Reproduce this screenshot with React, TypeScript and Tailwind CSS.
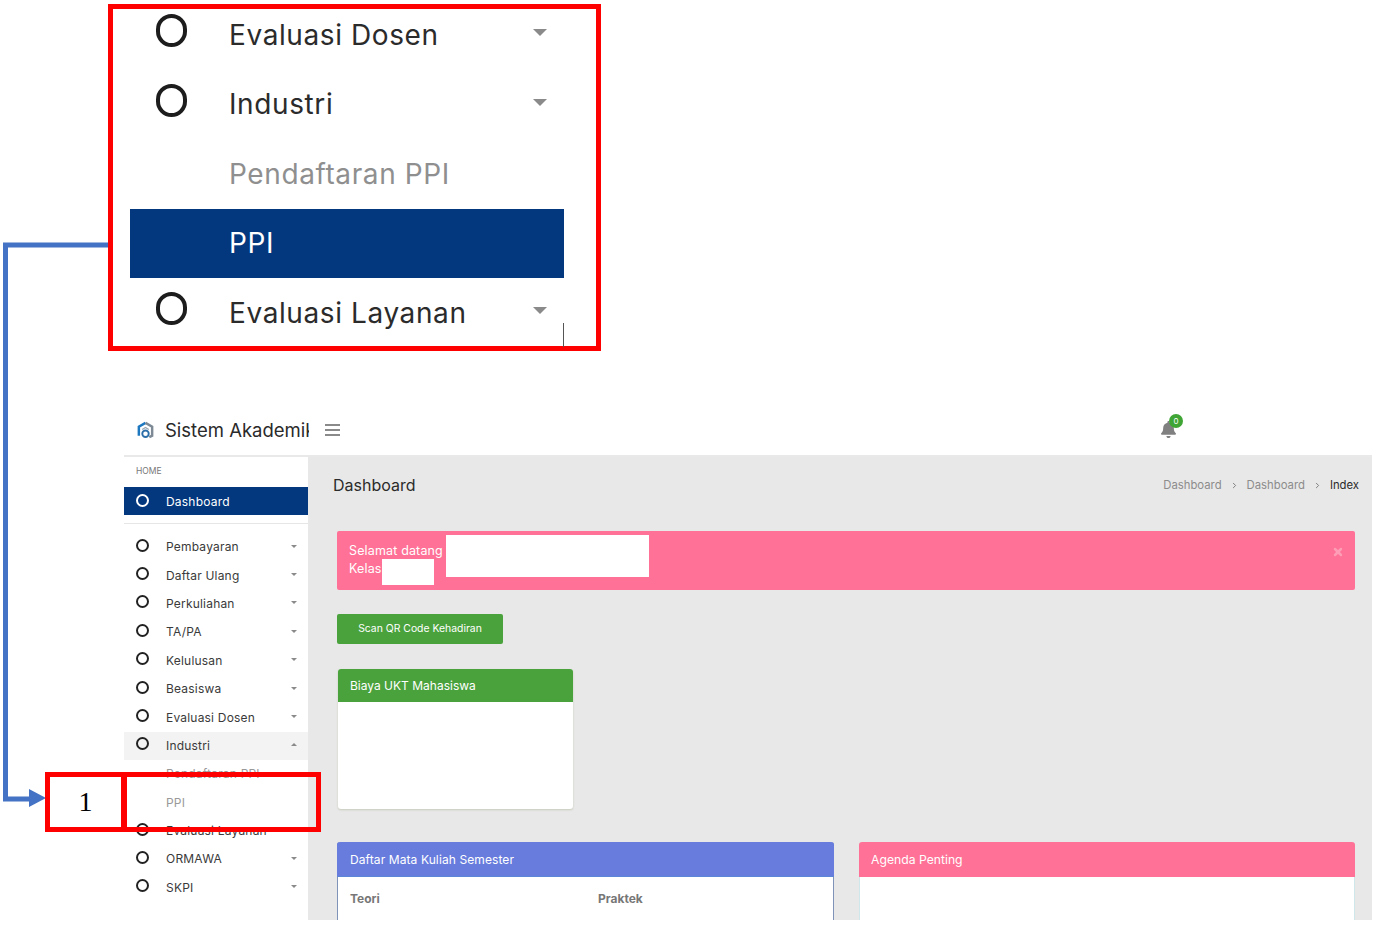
import { X, ChevronRight } from "lucide-react";
import { FaBell } from "react-icons/fa";

const font = "font-['Inter','Liberation_Sans',sans-serif]";

function Caret({ up = false, large = false }: { up?: boolean; large?: boolean }) {
  const size = large ? "border-x-[7px] border-t-[7px]" : "border-x-[3px] border-t-[3px]";
  return (
    <span className={`block h-0 w-0 border-x-transparent border-t-[#8a8a8a] ${size} ${up ? "rotate-180" : ""}`} />
  );
}

function Ring({ className }: { className: string }) {
  return <span className={`block shrink-0 rounded-full ${className}`} />;
}

function ZoomRow({ label, caret = true, ring = true, active = false, muted = false }: { label: string; caret?: boolean; ring?: boolean; active?: boolean; muted?: boolean }) {
  return (
    <div className={`flex h-[69.5px] items-center pl-[26px] pr-[17px] ${active ? "bg-[#03377e]" : ""}`}>
      <div className="w-[73px] shrink-0 -translate-y-[4px]">
        {ring && <Ring className="h-[33px] w-[31px] border-[4.5px] border-[#1d1d1d]" />}
      </div>
      <span className={`flex-1 text-[28px] tracking-[0.6px] ${active ? "text-white" : muted ? "text-[#8f8f8f]" : "text-[#2b2b2b]"}`}>{label}</span>
      {caret && <span className="-translate-y-[2px]"><Caret large /></span>}
    </div>
  );
}

function SideRow({ label, caret = true, ring = true, open = false, muted = false }: { label: string; caret?: boolean; ring?: boolean; open?: boolean; muted?: boolean }) {
  return (
    <div className={`flex h-[28.4px] items-center pl-[12px] pr-[11px] ${open ? "bg-[#f3f3f3]" : ""}`}>
      <div className="w-[30px] shrink-0 -translate-y-[2px]">
        {ring && <Ring className="h-[13px] w-[13px] border-2 border-[#222222]" />}
      </div>
      <span className={`flex-1 text-[12px] tracking-[0.2px] ${muted ? "text-[#999999]" : "text-[#3a3a3a]"}`}>{label}</span>
      {caret && <span className="-translate-y-[1px]"><Caret up={open} /></span>}
    </div>
  );
}

export default function App() {
  const menu = ["Pembayaran", "Daftar Ulang", "Perkuliahan", "TA/PA", "Kelulusan", "Beasiswa", "Evaluasi Dosen"];

  return (
    <div className={`relative h-[936px] w-[1392px] overflow-hidden bg-white ${font}`}>
      {/* potongan menu yang diperbesar */}
      <div className="ml-[108px] mt-[4px] h-[347px] w-[493px] overflow-hidden border-[5px] border-[#ff0000] bg-white">
        <div className="-mt-[9px] ml-[17px] w-[434px]">
          <ZoomRow label="Evaluasi Dosen" />
          <ZoomRow label="Industri" />
          <ZoomRow label="Pendaftaran PPI" caret={false} ring={false} muted />
          <ZoomRow label="PPI" caret={false} ring={false} active />
          <ZoomRow label="Evaluasi Layanan" />
        </div>
      </div>

      {/* aplikasi */}
      <div className="ml-[124px] mt-[54px] h-[515px] w-[1248px] overflow-hidden">
        <header className="flex h-[52px] items-center border-b-2 border-[#e9e9e9] bg-white">
          <div className="flex w-[185px] items-center overflow-hidden whitespace-nowrap pl-[12px]">
            <svg viewBox="0 0 20 20" className="h-[19px] w-[19px] shrink-0" fill="none">
              <path d="M3 15.5 V6 L10 2" stroke="#1e78c0" strokeWidth="2.6" />
              <path d="M10 2 L17 6 V15.5 L14 17" stroke="#7d8a96" strokeWidth="2.6" />
              <path d="M6.5 9 L10 6.8 L13.5 9" stroke="#9aa6b0" strokeWidth="1.4" />
              <circle cx="10" cy="13.4" r="3.4" stroke="#2c6fa8" strokeWidth="2" />
            </svg>
            <span className="ml-[10px] translate-y-[1px] text-[18.5px] text-[#2a2a2a]">Sistem Akademik</span>
          </div>
          <div className="ml-[16px] flex w-[15px] flex-col gap-[3px]">
            <span className="h-[2px] bg-[#8a8a8a]" />
            <span className="h-[2px] bg-[#8a8a8a]" />
            <span className="h-[2px] bg-[#8a8a8a]" />
          </div>
          <div className="relative ml-[820px] mt-[-1px]">
            <FaBell className="text-[17px] text-[#808080]" />
            <span className="absolute -right-[6px] -top-[7px] flex h-[14px] w-[14px] items-center justify-center rounded-full bg-[#3fa535] text-[8px] text-white">0</span>
          </div>
        </header>

        <div className="flex h-[463px]">
          <aside className="w-[184px] shrink-0 bg-white">
            <p className="flex h-[28px] items-center pl-[12px] text-[8.5px] text-[#777777]">HOME</p>
            <div className="mt-[2px] flex h-[28px] items-center bg-[#03377e] pl-[12px]">
              <div className="w-[30px] -translate-y-[1px]">
                <Ring className="h-[13px] w-[13px] border-2 border-white" />
              </div>
              <span className="translate-y-[1px] text-[12px] tracking-[0.2px] text-white">Dashboard</span>
            </div>
            <div className="mb-[9px] mt-[8px] h-[1px] bg-[#e6e6e6]" />
            {menu.map((m) => (
              <SideRow key={m} label={m} />
            ))}
            <SideRow label="Industri" open />
            <SideRow label="Pendaftaran PPI" caret={false} ring={false} muted />
            <SideRow label="PPI" caret={false} ring={false} muted />
            <SideRow label="Evaluasi Layanan" />
            <SideRow label="ORMAWA" />
            <SideRow label="SKPI" />
          </aside>

          <main className="min-w-0 flex-1 bg-[#e8e8e8] pl-[29px] pr-[17px]">
            <div className="-ml-[4px] -mr-[4px] flex h-[74px] items-start justify-between pt-[18px]">
              <h1 className="text-[16px] leading-[20px] text-[#2b2b2b]">Dashboard</h1>
              <div className="flex items-center gap-[8px] text-[11.3px] leading-[20px] text-[#8c8c8c]">
                <span>Dashboard</span>
                <ChevronRight size={9} strokeWidth={2.5} className="text-[#777777]" />
                <span>Dashboard</span>
                <ChevronRight size={9} strokeWidth={2.5} className="text-[#777777]" />
                <span className="text-[#2b2b2b]">Index</span>
              </div>
            </div>

            <div className="flex h-[59px] items-start justify-between rounded-[2px] bg-[#ff7196] pl-[12px] pr-[11px] pt-[11px] text-[12.5px] leading-[18px] tracking-[0.15px] text-white">
              <div>
                <p>Selamat datang</p>
                <p>Kelas</p>
              </div>
              <X size={12} strokeWidth={5} className="mt-[4px] text-[#ff9db6]" />
            </div>

            <button className="mt-[24px] block h-[30px] w-[166px] rounded-[2px] bg-[#4aa23c] text-[10.4px] text-white">Scan QR Code Kehadiran</button>

            <div className="ml-[1px] mt-[25px] h-[140px] w-[235px] overflow-hidden rounded-[3px] bg-white shadow-[0_1px_2px_rgba(150,160,120,0.4)]">
              <div className="flex h-[33px] items-center bg-[#4aa23c] pl-[12px] pt-[1px] text-[12px] text-white">Biaya UKT Mahasiswa</div>
            </div>

            <div className="mt-[33px] grid grid-cols-[497px_496px] gap-[25px]">
              <section className="h-[120px] rounded-t-[3px] border-x border-[#7f92b8] bg-white">
                <div className="-mx-px flex h-[35px] items-center rounded-t-[3px] border-b border-[#5c86d8] bg-[#677cdd] pl-[13px] pt-[1px] text-[12px] tracking-[0.1px] text-white">Daftar Mata Kuliah Semester</div>
                <div className="grid grid-cols-[248px_1fr] pl-[12px] pt-[13px] text-[12px] font-bold text-[#777777]">
                  <span>Teori</span>
                  <span>Praktek</span>
                </div>
              </section>
              <section className="h-[120px] rounded-t-[3px] border-x border-[#cfe6ea] bg-white">
                <div className="-mx-px flex h-[35px] items-center rounded-t-[3px] bg-[#ff7196] pl-[12px] pt-[1px] text-[12.2px] text-white">Agenda Penting</div>
              </section>
            </div>
          </main>
        </div>
      </div>

      {/* bagian yang disensor */}
      <div className="absolute left-[446px] top-[535px] h-[42px] w-[203px] bg-white" />
      <div className="absolute left-[382px] top-[559px] h-[26px] w-[52px] bg-white" />

      {/* garis tipis sisa potongan */}
      <div className="absolute left-[563px] top-[323px] h-[24px] w-px bg-[#555555]" />

      {/* anotasi */}
      <svg className="absolute left-0 top-0 h-[936px] w-[1392px]" viewBox="0 0 1392 936" fill="none">
        <path d="M108 245 H5.5 V799 H30" stroke="#4472c4" strokeWidth="5" />
        <path d="M29 789 L46 798 L29 807 Z" fill="#4472c4" />
      </svg>
      <div className="absolute left-[45px] top-[772px] flex h-[60px] w-[276px] border-[5px] border-[#ff0000]">
        <div className="flex w-[77px] items-center justify-center border-r-[6px] border-[#ff0000] font-['Liberation_Serif',serif] text-[28px] leading-none text-black">1</div>
      </div>
    </div>
  );
}
